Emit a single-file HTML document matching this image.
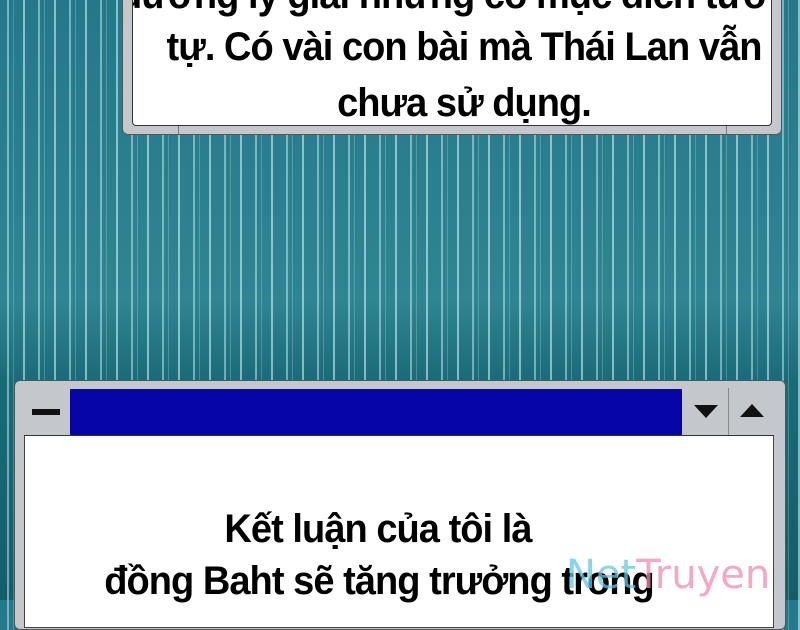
<!DOCTYPE html>
<html><head><meta charset="utf-8"><style>
html,body{margin:0;padding:0}
body{width:800px;height:600px;overflow:hidden;position:relative;
background:
repeating-linear-gradient(90deg,rgba(255,255,255,0) 0 7px,rgba(200,240,245,.5) 7px 9px,rgba(255,255,255,0) 9px 13px,rgba(200,240,245,.25) 13px 14px,rgba(255,255,255,0) 14px 23px,rgba(220,250,255,.55) 23px 25px,rgba(255,255,255,0) 25px 31px),
linear-gradient(180deg,#24788a 0,#2f8592 300px,#1a6b78 380px,#135e6a 600px);
font-family:"Liberation Sans",sans-serif}
.t{position:absolute;font-weight:bold;color:#000;white-space:nowrap;transform-origin:center;letter-spacing:-1px}
</style></head><body>
<div style="position:absolute;left:122px;top:-10px;width:660px;height:145px;background:#c4c8cc;border:1px solid #555;border-radius:6px;box-sizing:border-box"></div>
<div style="position:absolute;left:132px;top:-10px;width:640px;height:136px;background:#fff;border:1px solid #333;border-radius:4px;box-sizing:border-box;overflow:hidden">
<div class="t" style="left:-32px;width:720px;text-align:center;top:-18px;font-size:40px;transform:scaleX(.95)">đường lý giải nhưng có mục đích tương</div>
<div class="t" style="left:-32px;width:726px;text-align:center;top:34px;font-size:40px;transform:scaleX(.95)">tự. Có vài con bài mà Thái Lan vẫn</div>
<div class="t" style="left:-32px;width:726px;text-align:center;top:90px;font-size:40px;transform:scaleX(.95)">chưa sử dụng.</div>
</div>
<div style="position:absolute;left:178px;top:126px;width:1px;height:8px;background:#777"></div>
<div style="position:absolute;left:726px;top:126px;width:1px;height:8px;background:#777"></div>
<div style="position:absolute;left:14px;top:380px;width:772px;height:250px;background:#c4c8cc;border:1px solid #555;border-radius:6px;box-sizing:border-box"></div>
<div style="position:absolute;left:24px;top:388px;width:750px;height:240px;background:#fff;border:1px solid #444;box-sizing:border-box"></div>
<div style="position:absolute;left:24px;top:388px;width:750px;height:48px;background:#c4c8cc;border-bottom:1px solid #333;box-sizing:border-box"></div>
<div style="position:absolute;left:70px;top:389px;width:612px;height:46px;background:#0606a8"></div>
<div style="position:absolute;left:32px;top:409px;width:28px;height:6px;background:#111"></div>
<div style="position:absolute;left:728px;top:388px;width:1px;height:47px;background:#888"></div>
<div style="position:absolute;left:694px;top:405px;width:0;height:0;border-left:12px solid transparent;border-right:12px solid transparent;border-top:13px solid #111"></div>
<div style="position:absolute;left:740px;top:404px;width:0;height:0;border-left:12px solid transparent;border-right:12px solid transparent;border-bottom:13px solid #111"></div>
<div class="t" style="left:128px;width:500px;text-align:center;top:507px;font-size:40px;transform:scaleX(.95)">Kết luận của tôi là</div>
<div class="t" style="left:0px;width:758px;text-align:center;top:559px;font-size:40px;transform:scaleX(.95)">đồng Baht sẽ tăng trưởng trong</div>
<div style="position:absolute;left:566px;top:552px;font-size:40px;font-family:'DejaVu Sans',sans-serif;opacity:.75;white-space:nowrap"><span style="color:#5ec7e8">Net</span><span style="color:#f08cb5">Truyen</span></div>
</body></html>
